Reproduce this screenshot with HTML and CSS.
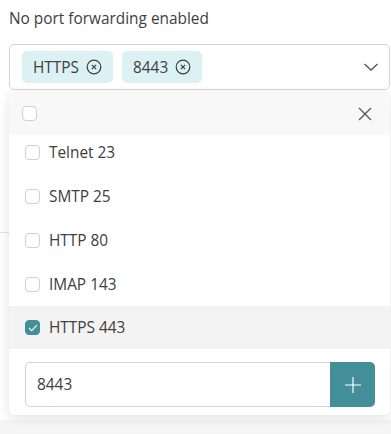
FILE: index.html
```html
<html>

<head>
  <meta name="viewport" content="width=device-width, initial-scale=1.0">
  <link rel="stylesheet" href="styles.css">
</head>

<body>
  <div class="page">
    <p class="title">No port forwarding enabled</p>
    <div class="select">
      <span class="chip">HTTPS
        <svg class="chip-x" width="16" height="16" viewBox="0 0 16 16"><circle cx="8" cy="8" r="6.8" fill="none" stroke="#3d3d3d" stroke-width="1.2"/><path d="M5.9 5.9l4.2 4.2M10.1 5.9l-4.2 4.2" stroke="#3d3d3d" stroke-width="1.2"/></svg>
      </span>
      <span class="chip">8443
        <svg class="chip-x" width="16" height="16" viewBox="0 0 16 16"><circle cx="8" cy="8" r="6.8" fill="none" stroke="#3d3d3d" stroke-width="1.2"/><path d="M5.9 5.9l4.2 4.2M10.1 5.9l-4.2 4.2" stroke="#3d3d3d" stroke-width="1.2"/></svg>
      </span>
      <svg class="chevron" width="16" height="10" viewBox="0 0 16 10"><path d="M1.5 2l6.5 6 6.5-6" fill="none" stroke="#555" stroke-width="1.3"/></svg>
    </div>
    <div class="behind"></div>
    <div class="footer-bg"></div>
  </div>

  <div class="menu">
    <div class="menu-head">
      <span class="box"></span>
      <svg width="14" height="14" viewBox="0 0 14 14"><path d="M1 1l12 12M13 1L1 13" stroke="#555" stroke-width="1.3"/></svg>
    </div>
    <div class="list">
      <div class="scroll">
        <div class="row"><span class="box"></span>Telnet 23</div>
        <div class="row"><span class="box"></span>SMTP 25</div>
        <div class="row"><span class="box"></span>HTTP 80</div>
        <div class="row"><span class="box"></span>IMAP 143</div>
        <div class="row active"><span class="box checked"><svg width="10" height="8" viewBox="0 0 10 8"><path d="M1 4l2.6 2.6L9 1.2" fill="none" stroke="#fff" stroke-width="1.1"/></svg></span>HTTPS 443</div>
      </div>
    </div>
    <div class="add">
      <div class="add-input">8443</div>
      <div class="add-btn"><svg width="16" height="16" viewBox="0 0 16 16"><path d="M8 0v16M0 8h16" stroke="#fff" stroke-width="1.2"/></svg></div>
    </div>
  </div>
</body>

</html>
```
FILE: styles.css
```css
body {
  margin: 0;
  font-family: "Open Sans", "Noto Sans", sans-serif;
  color: #404040;
  background: #fff;
}

.page {
  padding: 0 1px 0 9px;
}

.title {
  margin: 0;
  padding-top: 9px;
  height: 20px;
  line-height: 20px;
  font-size: 15.4px;
}

.select {
  margin-top: 15px;
  height: 44px;
  border: 1px solid #d4d4d4;
  border-radius: 5px;
  display: flex;
  align-items: center;
  gap: 9px;
  padding: 0 12px;
}

.chip {
  display: flex;
  align-items: center;
  gap: 7px;
  height: 32px;
  padding: 0 11px;
  background: #dcf1f3;
  border-radius: 5px;
  font-size: 15.4px;
}

.chevron {
  margin-left: auto;
  margin-right: -2px;
}

.behind {
  height: 142px;
  border-bottom: 1px solid #e3e3e3;
  margin-left: -9px;
}

.footer-bg {
  margin-top: 187px;
  margin-left: -9px;
  margin-right: -1px;
  height: 20px;
  background: #f5f5f5;
}

.menu {
  position: absolute;
  top: 92px;
  left: 9px;
  width: 381px;
  background: #fff;
  border-radius: 5px;
  box-shadow: 0 3px 12px rgba(0, 0, 0, 0.12);
  overflow: hidden;
}

.menu-head {
  height: 43px;
  background: #f8f8f8;
  display: flex;
  align-items: center;
  justify-content: space-between;
  padding: 0 18px 0 13px;
}

.box {
  width: 13px;
  height: 13px;
  border: 1.5px solid #d0d0d2;
  border-radius: 4px;
  background: #fff;
  display: flex;
  align-items: center;
  justify-content: center;
  flex-shrink: 0;
}

.box.checked {
  background: #438f99;
  border-color: #438f99;
}

.list {
  height: 215px;
  overflow: hidden;
}

.scroll {
  margin-top: -5px;
}

.row {
  height: 44px;
  display: flex;
  align-items: center;
  gap: 9px;
  padding-left: 16px;
  font-size: 15.4px;
}

.row.active {
  background: #f3f3f3;
  height: 43px;
}

.add {
  display: flex;
  padding: 12px 15px 8px 16px;
}

.add-input {
  flex: 1;
  height: 43px;
  border: 1px solid #d4d4d4;
  border-right: none;
  border-radius: 5px 0 0 5px;
  display: flex;
  align-items: center;
  padding-left: 11px;
  font-size: 15.4px;
}

.add-btn {
  width: 45px;
  height: 45px;
  background: #428f99;
  border-radius: 0 5px 5px 0;
  display: flex;
  align-items: center;
  justify-content: center;
}
```
